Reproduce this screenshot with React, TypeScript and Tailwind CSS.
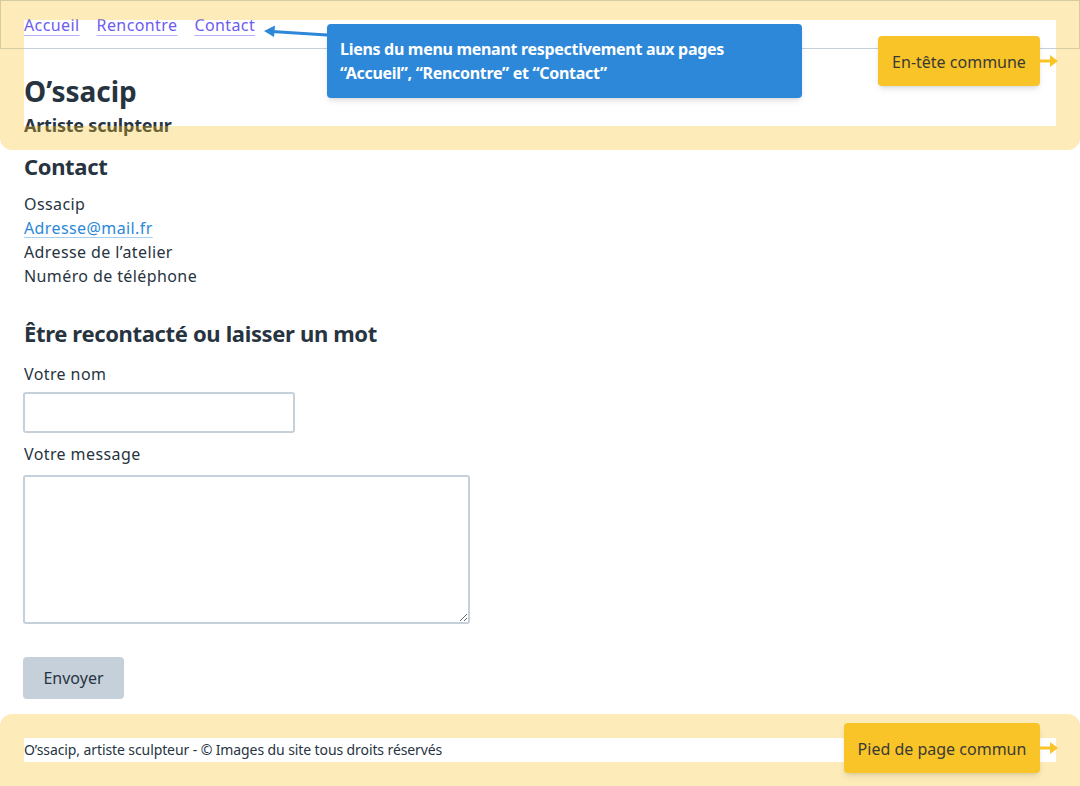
import React from "react";

const frame = "rgba(248,196,39,0.32)";

function ArrowLeft() {
  return (
    <svg className="absolute left-[258px] top-[22px]" width="72" height="20" viewBox="0 0 72 20">
      <line x1="69" y1="13" x2="14" y2="9.5" stroke="#2d88d9" strokeWidth="3" />
      <polygon points="6,9 17,3.5 16,15" fill="#2d88d9" />
    </svg>
  );
}

function ArrowRight({ top }: { top: string }) {
  return (
    <svg className={`absolute left-[1040px] ${top}`} width="20" height="16" viewBox="0 0 20 16">
      <line x1="0" y1="8" x2="11" y2="8" stroke="#f8c427" strokeWidth="3" />
      <polygon points="10,2 18,8 10,14" fill="#f8c427" />
    </svg>
  );
}

export default function App() {
  return (
    <div className="relative h-[786px] overflow-hidden bg-white font-['Noto_Sans',sans-serif] text-[#27343f]">
      <header className="h-[150px]">
        <nav className="flex h-[49px] items-center gap-[17px] border border-[#c5d0da] px-[23px] text-base tracking-[0.4px]">
          <a href="#" className="text-[#6c5cf0] underline decoration-[#b7aefb] underline-offset-[4px]">Accueil</a>
          <a href="#" className="text-[#6c5cf0] underline decoration-[#b7aefb] underline-offset-[4px]">Rencontre</a>
          <a href="#" className="text-[#6c5cf0] underline decoration-[#b7aefb] underline-offset-[4px]">Contact</a>
        </nav>
        <div className="px-6">
          <h1 className="mt-6 text-[28px] font-bold leading-9">O’ssacip</h1>
          <p className="mt-[4px] text-lg font-bold leading-6 tracking-[-0.2px]">Artiste sculpteur</p>
        </div>
      </header>

      <main className="px-6">
        <h2 className="text-[22px] font-bold leading-8 tracking-[-0.35px]">Contact</h2>
        <div className="mt-[10px] text-base leading-6 tracking-[0.4px]">
          <p>Ossacip</p>
          <p>
            <a href="#" className="text-[#2b88d8] underline decoration-[#a9cff0] underline-offset-[3px]">Adresse@mail.fr</a>
          </p>
          <p>Adresse de l’atelier</p>
          <p>Numéro de téléphone</p>
        </div>

        <h2 className="mt-[29px] text-[22px] font-bold leading-8 tracking-[-0.35px]">Être recontacté ou laisser un mot</h2>
        <form className="flex flex-col items-start tracking-[0.4px]">
          <label className="mt-[13px] text-base leading-6">Votre nom</label>
          <input className="-ml-px mt-[6px] h-[41px] w-[272px] rounded-[3px] border-2 border-[#c5d0da]" />
          <label className="mt-[9px] text-base leading-6">Votre message</label>
          <textarea className="-ml-px mt-[9px] h-[149px] w-[447px] rounded-[3px] border-2 border-[#c5d0da]" />
          <button type="button" className="-ml-px mt-[33px] h-[42px] w-[101px] rounded-[4px] bg-[#c5d0da] text-base tracking-normal">
            Envoyer
          </button>
        </form>
      </main>

      <footer className="mt-[15px] p-6 text-sm leading-6 tracking-[-0.1px]">
        O’ssacip, artiste sculpteur - © Images du site tous droits réservés
      </footer>

      {/* annotations */}
      <div
        className="pointer-events-none absolute left-0 top-0 h-[150px] w-full rounded-b-[12px] border-x-[24px] border-b-[24px] border-t-[20px]"
        style={{ borderColor: frame }}
      />
      <div
        className="pointer-events-none absolute left-0 top-[714px] h-[72px] w-full rounded-t-[12px] border-[24px]"
        style={{ borderColor: frame }}
      />

      <ArrowLeft />
      <div className="absolute left-[327px] top-[24px] h-[74px] w-[475px] rounded-[4px] bg-[#2d88d9] px-[13px] pt-[13px] text-base font-bold leading-6 tracking-[-0.3px] text-white shadow-md">
        Liens du menu menant respectivement aux pages
        <br />
        “Accueil”, “Rencontre” et “Contact”
      </div>

      <div className="absolute left-[878px] top-[36px] flex h-[50px] w-[162px] items-center justify-center rounded-[4px] bg-[#f8c427] pt-[2px] text-base text-[#3a3a35] shadow-md">
        En-tête commune
      </div>
      <ArrowRight top="top-[53px]" />

      <div className="absolute left-[844px] top-[723px] flex h-[50px] w-[196px] items-center justify-center rounded-[4px] bg-[#f8c427] pt-[2px] text-base text-[#3a3a35] shadow-md">
        Pied de page commun
      </div>
      <ArrowRight top="top-[740px]" />
    </div>
  );
}
